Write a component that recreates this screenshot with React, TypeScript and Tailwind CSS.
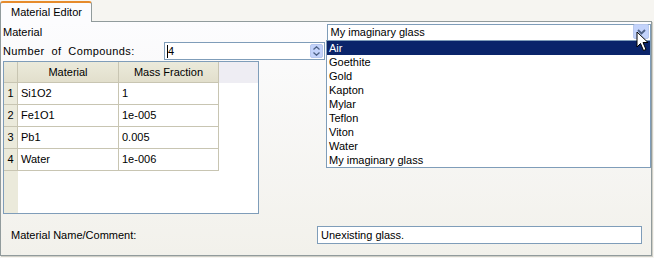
import React from 'react';

const FONT = "font-['Tahoma','Liberation_Sans','DejaVu_Sans',sans-serif]";

const rows = [
  { n: 1, material: 'Si1O2', fraction: '1' },
  { n: 2, material: 'Fe1O1', fraction: '1e-005' },
  { n: 3, material: 'Pb1', fraction: '0.005' },
  { n: 4, material: 'Water', fraction: '1e-006' },
];

const options = ['Air', 'Goethite', 'Gold', 'Kapton', 'Mylar', 'Teflon', 'Viton', 'Water', 'My imaginary glass'];

function SpinButtons() {
  return (
    <div className="flex flex-col w-[13px] h-[14px] rounded-[2px] border border-[#b8c8ee] bg-[#c3d3fb] items-center justify-center gap-[2px]">
      <svg width="7" height="4" viewBox="0 0 7 4">
        <path d="M0.5 3.5 L3.5 0.8 L6.5 3.5" fill="none" stroke="#4d6185" strokeWidth="1.3" />
      </svg>
      <svg width="7" height="4" viewBox="0 0 7 4">
        <path d="M0.5 0.5 L3.5 3.2 L6.5 0.5" fill="none" stroke="#4d6185" strokeWidth="1.3" />
      </svg>
    </div>
  );
}

function Cursor() {
  return (
    <svg className="absolute left-[636px] top-[31px]" width="14" height="22" viewBox="0 0 14 22">
      <path d="M1 1 L1 16 L4.5 12.5 L7.5 19.5 L10 18.5 L7 11.5 L12 11.5 Z" fill="#fff" stroke="#000" strokeWidth="1" />
    </svg>
  );
}

export default function App() {
  return (
    <div className={`relative w-[654px] h-[258px] bg-[#f6f5f1] text-[11px] text-black ${FONT} flex flex-col`}>
      {/* tab strip */}
      <div className="flex h-[21px] items-end">
        <div className="relative z-10 -mb-px h-[21px] w-[92px] border border-b-0 border-[#919b9c] rounded-t-[3px] bg-[#fcfcfe] border-t-2 border-t-[#e68b2c] flex items-center pl-[10px]">
          Material Editor
        </div>
      </div>

      {/* panel */}
      <div className="w-[652px] h-[235px] border border-[#919b9c] bg-gradient-to-b from-[#fcfcfe] to-[#f2f1eb] flex flex-col pl-[1px] shadow-[1px_1px_0_#d0cfc7]">
        <div className="flex h-[19px] items-center mt-[1px]">
          <span className="w-[324px] pl-[1px]">Material</span>
          <div className="ml-[1px] h-[17px] w-[325px] border border-[#7f9db9] bg-white flex items-center pl-[3px]">
            My imaginary glass
          </div>
        </div>

        <div className="flex h-[18px] items-center">
          <span className="w-[162px] pl-[1px] tracking-[0.4px]">Number&nbsp; of&nbsp; Compounds:</span>
          <div className="h-[18px] w-[161px] border border-[#7f9db9] bg-white flex items-center justify-between pl-[3px] pr-[1px]">
            <span className="border-l border-black leading-[13px] -ml-px">4</span>
            <SpinButtons />
          </div>
        </div>

        <div className="mt-[1px] ml-px w-[256px] h-[153px] border border-[#7f9db9] bg-white flex flex-col">
          <div className="flex h-[21px] bg-[#eeedf3]">
            <div className="w-[14px] bg-gradient-to-b from-[#ebeadb] to-[#e2dfcc] border-r border-b border-[#c8c5b2]" />
            <div className="w-[101px] bg-gradient-to-b from-[#ebeadb] to-[#e2dfcc] border-r border-b border-[#c8c5b2] flex items-center justify-center">
              Material
            </div>
            <div className="w-[100px] bg-gradient-to-b from-[#ebeadb] to-[#e2dfcc] border-r border-b border-[#c8c5b2] flex items-center justify-center">
              Mass Fraction
            </div>
          </div>
          {rows.map((r) => (
            <div key={r.n} className="flex h-[22px]">
              <div className="w-[14px] bg-[#ebeadb] border-r border-b border-[#c8c5b2] flex items-center justify-center">
                {r.n}
              </div>
              <div className="w-[101px] border-r border-b border-[#c8c5b2] flex items-center pl-[3px]">{r.material}</div>
              <div className="w-[100px] border-r border-b border-[#c8c5b2] flex items-center pl-[3px]">{r.fraction}</div>
            </div>
          ))}
          <div className="flex-1 flex">
            <div className="w-[14px] bg-[#ebeadb]" />
          </div>
        </div>

        <div className="flex items-center mt-[12px] h-[18px]">
          <span className="w-[315px] pl-[9px]">Material Name/Comment:</span>
          <div className="h-[18px] w-[325px] border border-[#7f9db9] bg-white flex items-center pl-[3px]">
            Unexisting glass.
          </div>
        </div>
      </div>

      {/* open combobox popup */}
      <div className="absolute left-[326px] top-[40px] w-[325px] border border-[#7f9db9] bg-white flex flex-col">
        {options.map((o, i) => (
          <div
            key={o}
            className={`h-[14px] leading-[14px] pl-[2px] ${i === 0 ? 'bg-[#0a246a] text-white' : ''}`}
          >
            {o}
          </div>
        ))}
      </div>

      {/* combobox arrow button */}
      <div className="absolute left-[633px] top-[24px] w-[16px] h-[15px] rounded-[2px] border border-[#b8c8ee] bg-[#c3d3fb] flex items-center justify-center">
        <svg width="9" height="6" viewBox="0 0 9 6">
          <path d="M1 1 L4.5 4.5 L8 1" fill="none" stroke="#4d6185" strokeWidth="1.8" />
        </svg>
      </div>
      <Cursor />
    </div>
  );
}
